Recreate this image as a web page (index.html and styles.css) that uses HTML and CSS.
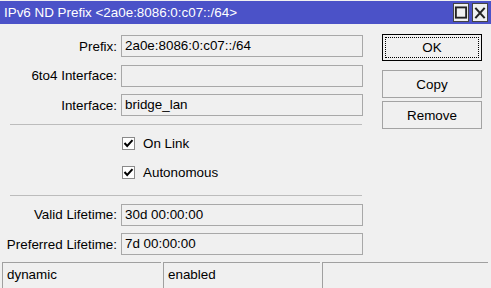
FILE: index.html
```html
<!DOCTYPE html>
<html lang="en">
	<head>
		<meta charset="UTF-8">
		<title>IPv6 ND Prefix</title>
		<link rel="stylesheet" href="styles.css">
	</head>
	<body>
		<div class="window">
			<div class="title-bar">
				<span class="title">IPv6 ND Prefix &lt;2a0e:8086:0:c07::/64&gt;</span>
				<span class="title-btns">
					<span class="tbtn">
						<svg width="15" height="18" viewBox="0 0 15 18"><rect x="2" y="3" width="11" height="11" fill="none" stroke="#222" stroke-width="2"/></svg>
					</span>
					<span class="tbtn">
						<svg width="15" height="18" viewBox="0 0 15 18"><path d="M2.5 3.5 L12.5 14.5 M12.5 3.5 L2.5 14.5" stroke="#222" stroke-width="2.2"/></svg>
					</span>
				</span>
			</div>

			<div class="body">
				<div class="form">
					<div class="row">
						<label>Prefix:</label>
						<div class="field">2a0e:8086:0:c07::/64</div>
					</div>
					<div class="row">
						<label>6to4 Interface:</label>
						<div class="field"></div>
					</div>
					<div class="row">
						<label>Interface:</label>
						<div class="field">bridge_lan</div>
					</div>

					<div class="sep"></div>

					<div class="check first">
						<span class="box">
							<svg width="11" height="11" viewBox="0 0 11 11"><path d="M1.5 5 L4.2 8 L9.5 2.2" fill="none" stroke="#000" stroke-width="2"/></svg>
						</span>
						On Link
					</div>
					<div class="check">
						<span class="box">
							<svg width="11" height="11" viewBox="0 0 11 11"><path d="M1.5 5 L4.2 8 L9.5 2.2" fill="none" stroke="#000" stroke-width="2"/></svg>
						</span>
						Autonomous
					</div>

					<div class="sep sep2"></div>

					<div class="row">
						<label>Valid Lifetime:</label>
						<div class="field">30d 00:00:00</div>
					</div>
					<div class="row">
						<label>Preferred Lifetime:</label>
						<div class="field">7d 00:00:00</div>
					</div>
				</div>

				<div class="buttons">
					<a href="#" class="btn default"><span>OK</span></a>
					<a href="#" class="btn">Copy</a>
					<a href="#" class="btn">Remove</a>
				</div>
			</div>

			<div class="status">
				<div class="panel p1">dynamic</div>
				<div class="panel p2">enabled</div>
				<div class="panel p3"></div>
			</div>
		</div>
	</body>
</html>
```

FILE: styles.css
```css
*{
	margin: 0;
	padding: 0;
	box-sizing: border-box;
}
body{
	background: #f0f0f0;
	font-family: "Liberation Sans", Arial, sans-serif;
	font-size: 13.4px;
	color: #000;
}
a{
	text-decoration: none;
	color: #000;
}
.window{
	width: 491px;
	height: 288px;
	padding-top: 1px;
	overflow: hidden;
}

/* title */
.title-bar{
	height: 23px;
	background: #4b52c8;
	display: flex;
	align-items: center;
	justify-content: space-between;
	padding: 0 3px 0 4px;
}
.title{
	color: #fff;
}
.title-btns{
	display: flex;
	gap: 3px;
}
.tbtn{
	width: 16px;
	height: 19px;
	background: #f0f0f0;
	border: 1px solid #444;
	display: flex;
	align-items: center;
	justify-content: center;
}

/* form */
.body{
	display: flex;
	padding-top: 10px;
}
.form{
	width: 370px;
	padding-top: 1px;
}
.row{
	display: flex;
	align-items: center;
	margin-bottom: 7.5px;
}
.row label{
	width: 117px;
	text-align: right;
	padding-right: 4px;
	box-sizing: content-box;
}
.field{
	width: 242px;
	height: 22px;
	line-height: 20px;
	border: 1px solid #a8a8a8;
	padding-left: 3px;
}
.sep{
	margin: 2px 0 0 10px;
	width: 352px;
	border-top: 1px solid #bcbcbc;
}
.sep2{
	margin-top: 7px;
	margin-bottom: 8px;
}
.check{
	display: flex;
	align-items: center;
	margin-left: 122px;
	height: 14px;
	margin-bottom: 15px;
}
.check.first{
	margin-top: 12px;
}
.box{
	width: 13px;
	height: 13px;
	border: 1px solid #8a8a8a;
	background: #fff;
	display: flex;
	align-items: center;
	justify-content: center;
	margin-right: 8px;
}

/* buttons */
.buttons{
	margin-left: 12px;
	display: flex;
	flex-direction: column;
}
.btn{
	width: 100px;
	height: 28px;
	border: 1px solid #a3a3a3;
	background: #f0f0f0;
	display: flex;
	align-items: center;
	justify-content: center;
	margin-bottom: 3px;
}
.btn.default{
	height: 27px;
	border: 1px solid #000;
	padding: 2px;
	margin-bottom: 9px;
}
.btn.default span{
	width: 100%;
	height: 100%;
	border: 1px dotted #000;
	display: flex;
	align-items: center;
	justify-content: center;
}

/* status bar */
.status{
	display: flex;
	gap: 2px;
	padding-left: 2px;
	margin-top: -1px;
}
.panel{
	height: 30px;
	border-top: 1px solid #a0a0a0;
	border-left: 1px solid #a0a0a0;
	padding: 4px 0 0 4px;
}
.p1{
	width: 159px;
}
.p2{
	width: 157px;
}
.p3{
	width: 166px;
}
```
